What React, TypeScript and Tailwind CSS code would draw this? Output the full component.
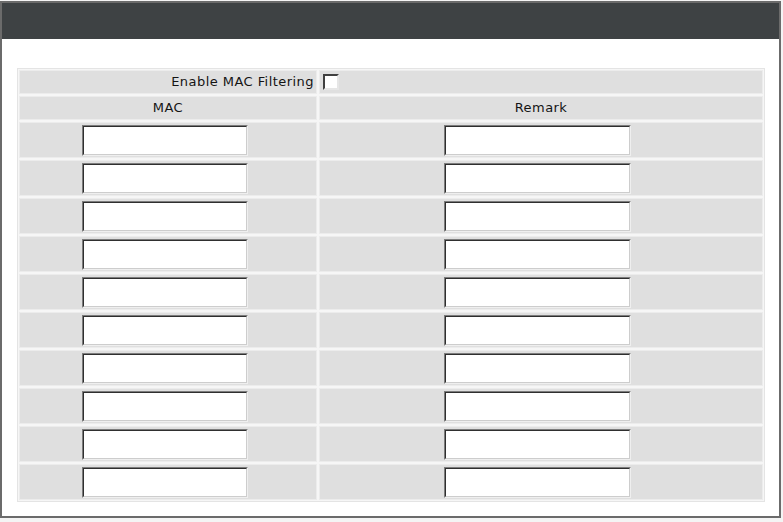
import React, { useState } from 'react';

const ROWS = 10;

const Field: React.FC<{ width: string }> = ({ width }) => (
    <span className={`flex ${width} h-[31px] border border-t-[#7c7c7c] border-l-[#7c7c7c] border-r-[#efefef] border-b-[#efefef]`}>
        <input
            type="text"
            className="w-full h-full bg-white border border-t-[#2f2f2f] border-l-[#2f2f2f] border-r-[#cdcdcd] border-b-[#cdcdcd] outline-none px-1 text-[13px]"
        />
    </span>
);

const Cell: React.FC<{ className?: string; children?: React.ReactNode }> = ({ className = '', children }) => (
    <div className={`bg-[#dfdfdf] border border-[#ececec] ${className}`}>{children}</div>
);

export default function App() {
    const [enabled, setEnabled] = useState(false);

    return (
        <div className="w-[783px] h-[522px] bg-[#f4f4f4] pt-[1px] font-['DejaVu_Sans',sans-serif] text-[#141414]">
            <div className="w-[781px] h-[517px] border-2 border-[#6b6b6b] bg-white flex flex-col">
                <div className="h-[36px] bg-[#3e4244] shrink-0" />

                <div className="mt-[29px] ml-[15px] w-[748px] border border-[#e4e4e4] bg-[#f6f6f6] p-px">
                    <div className="grid grid-cols-[298px_1fr] gap-[2px] text-[13px] tracking-[0.45px]">
                        <Cell className="h-[24px] flex items-center justify-end pr-[2px]">
                            Enable MAC Filtering
                        </Cell>
                        <Cell className="h-[24px] flex items-center pl-[3px]">
                            <button
                                type="button"
                                onClick={() => setEnabled(!enabled)}
                                className="w-[16px] h-[16px] bg-white border-2 border-t-[#404040] border-l-[#404040] border-r-[#e6e6e6] border-b-[#e6e6e6] flex items-center justify-center text-[11px] leading-none"
                            >
                                {enabled ? '✓' : ''}
                            </button>
                        </Cell>

                        <Cell className="h-[24px] flex items-center justify-center">MAC</Cell>
                        <Cell className="h-[24px] flex items-center justify-center">Remark</Cell>

                        {Array.from({ length: ROWS }).map((_, i) => (
                            <React.Fragment key={i}>
                                <Cell className="h-[36px] flex items-center justify-center pr-[6px]">
                                    <Field width="w-[166px]" />
                                </Cell>
                                <Cell className="h-[36px] flex items-center justify-center pr-[7px]">
                                    <Field width="w-[187px]" />
                                </Cell>
                            </React.Fragment>
                        ))}
                    </div>
                </div>
            </div>
        </div>
    );
}
